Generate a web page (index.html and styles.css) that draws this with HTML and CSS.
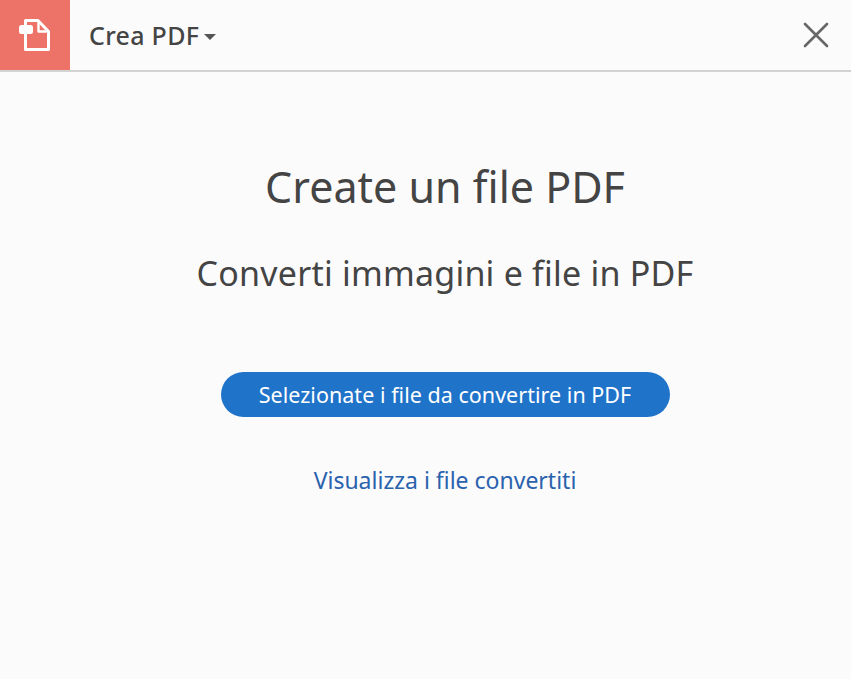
FILE: index.html
```html
<!DOCTYPE html>
<html lang="it">
<head>
    <meta charset="UTF-8">
    <title>Crea PDF</title>
    <link rel="stylesheet" href="styles.css">
</head>
<body>
    <div class="header">
        <div class="tool-icon">
            <svg width="32" height="32" viewBox="0 0 32 32" fill="none" stroke="#fff" stroke-width="3" stroke-linejoin="round">
                <path d="M6.5 8V1.5H19L29.5 12.5V30.5H6.5V15"/>
                <path d="M19.5 2V12.5H29" stroke-width="2.4"/>
                <rect x="0" y="6" width="14" height="9" rx="2.5" fill="#fff" stroke="none"/>
            </svg>
        </div>
        <div class="tool-name">Crea PDF<span class="caret"></span></div>
        <svg class="close" width="26" height="26" viewBox="0 0 26 26" stroke="#666" stroke-width="2.6" stroke-linecap="round">
            <path d="M2 2L24 24M24 2L2 24"/>
        </svg>
    </div>
    <div class="content">
        <h1>Create un file PDF</h1>
        <h2>Converti immagini e file in PDF</h2>
        <button type="button">Selezionate i file da convertire in PDF</button>
        <a href="#">Visualizza i file convertiti</a>
    </div>
</body>
</html>
```

FILE: styles.css
```css
body {
    margin: 0;
    font-family: "Noto Sans", "Open Sans", sans-serif;
    background-color: #fbfbfc;
    color: #444;
}
.header {
    display: flex;
    align-items: center;
    height: 70px;
    border-bottom: 2px solid #d3d3d3;
}
.tool-icon {
    display: flex;
    align-items: center;
    justify-content: center;
    width: 70px;
    height: 70px;
    background-color: #ed7268;
}
.tool-name {
    margin-left: 19px;
    font-size: 25px;
    font-weight: 500;
    letter-spacing: 0.3px;
    color: #444;
}
.caret {
    display: inline-block;
    margin-left: 5px;
    vertical-align: 5px;
    border-left: 6px solid transparent;
    border-right: 6px solid transparent;
    border-top: 6px solid #555;
}
.close {
    margin-left: auto;
    margin-right: 22px;
}
.content {
    display: flex;
    flex-direction: column;
    align-items: center;
    padding-left: 39px;
}
h1 {
    margin: 86px 0 0;
    font-size: 43px;
    font-weight: 400;
    line-height: 58px;
}
h2 {
    margin: 34px 0 0;
    font-size: 34px;
    font-weight: 400;
    letter-spacing: 0.22px;
    line-height: 46px;
}
button {
    margin-top: 76px;
    width: 449px;
    height: 45px;
    padding: 0;
    border: none;
    border-radius: 23px;
    background-color: #1f73c9;
    color: white;
    font-family: inherit;
    font-size: 21.5px;
    letter-spacing: 0.03px;
}
a {
    margin-top: 47px;
    font-size: 23px;
    line-height: 33px;
    color: #2a62ad;
    text-decoration: none;
}
```
